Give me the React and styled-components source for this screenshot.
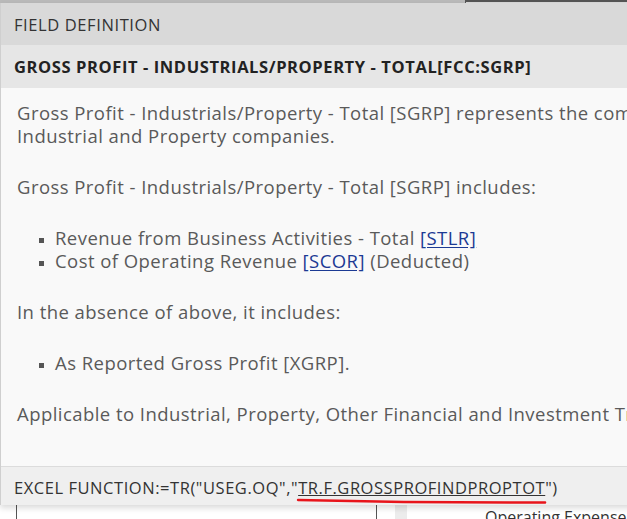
import React from "react";
import styled, { createGlobalStyle } from "styled-components";

const Global = createGlobalStyle`
  html, body { margin: 0; padding: 0; background: #ffffff; }
  body { width: 627px; height: 519px; overflow: hidden; font-family: "Open Sans", Lato, Arial, sans-serif; }
`;

const Page = styled.div`
  width: 627px;
  height: 519px;
  display: flex;
  flex-direction: column;
  overflow: hidden;
  background: #fff;
`;

const TopStrip = styled.div`
  height: 3px;
  display: flex;
  flex-shrink: 0;
`;

const StripGray = styled.div`
  width: 465px;
  background: #bababa;
`;

const StripDark = styled.div`
  flex: 1;
  background: #d9d9d9;
  border-top: 2px solid #555;
  border-left: 1px solid #555;
  box-sizing: border-box;
`;

const Panel = styled.div`
  position: relative;
  z-index: 1;
  height: 502px;
  flex-shrink: 0;
  width: 680px;
  display: flex;
  flex-direction: column;
  border-left: 1px solid #cfcfcf;
  box-sizing: border-box;
  box-shadow: 0 3px 6px rgba(0, 0, 0, 0.15);
  color: #333;
`;

const Header = styled.div`
  height: 42px;
  background: #d9d9d9;
  display: flex;
  align-items: center;
  padding-left: 13px;
  font-size: 16.5px;
  letter-spacing: 0.6px;
  color: #333;
`;

const Title = styled.div`
  height: 43px;
  background: #e6e6e6;
  display: flex;
  align-items: center;
  padding-left: 13px;
  font-size: 16.5px;
  letter-spacing: 0.6px;
  font-weight: 700;
  color: #222;
  white-space: nowrap;
`;

const Body = styled.div`
  flex: 1;
  background: #f9f9f9;
  padding: 13px 0 0 16px;
  font-size: 18.5px;
  letter-spacing: 0.45px;
  line-height: 23px;
  color: #5a5a5a;
  white-space: nowrap;
  overflow: hidden;
`;

const Para = styled.p`
  margin: 0 0 28px;
`;

const List = styled.ul`
  margin: 0 0 28px;
  padding: 0 0 0 38px;
  list-style: square;
`;

const Item = styled.li`
  &::marker { color: #555; font-size: 13px; }
`;

const Link = styled.a`
  color: #1c3a94;
  text-decoration: underline;
  text-underline-offset: 2px;
`;

const Footer = styled.div`
  height: 39px;
  flex-shrink: 0;
  background: #efefef;
  border-top: 1px solid #dcdcdc;
  display: flex;
  align-items: center;
  padding: 2px 0 0 13px;
  box-sizing: border-box;
  font-size: 16.5px;
  letter-spacing: 0.55px;
  color: #333;
  white-space: nowrap;
`;

const Marked = styled.span`
  position: relative;
  text-decoration: underline;
  text-underline-offset: 1px;
`;

const RedMark = styled.svg`
  position: absolute;
  left: 0;
  bottom: -6px;
  width: 100%;
  height: 8px;
  overflow: visible;
`;

const Under = styled.div`
  flex: 1;
  display: flex;
  background: #fff;
  position: relative;
`;

const Cell = styled.div`
  width: ${(p) => p.$w}px;
  border-left: ${(p) => (p.$line ? "1px solid #555" : "none")};
  background: ${(p) => p.$bg || "transparent"};
  flex-shrink: 0;
`;

const UnderText = styled.div`
  padding-left: 8px;
  font-size: 16px;
  color: #333;
  line-height: 14px;
  padding-top: 5px;
  white-space: nowrap;
`;

export default function App() {
  return (
    <>
      <Global />
      <Page>
        <TopStrip>
          <StripGray />
          <StripDark />
        </TopStrip>
        <Panel>
          <Header>FIELD DEFINITION</Header>
          <Title>GROSS PROFIT - INDUSTRIALS/PROPERTY - TOTAL[FCC:SGRP]</Title>
          <Body>
            <Para>
              Gross Profit - Industrials/Property - Total [SGRP] represents the combined gross profit of
              <br />
              Industrial and Property companies.
            </Para>
            <Para>Gross Profit - Industrials/Property - Total [SGRP] includes:</Para>
            <List>
              <Item>
                Revenue from Business Activities - Total <Link>[STLR]</Link>
              </Item>
              <Item>
                Cost of Operating Revenue <Link>[SCOR]</Link> (Deducted)
              </Item>
            </List>
            <Para>In the absence of above, it includes:</Para>
            <List>
              <Item>As Reported Gross Profit [XGRP].</Item>
            </List>
            <Para>Applicable to Industrial, Property, Other Financial and Investment Trust companies.</Para>
          </Body>
          <Footer>
            EXCEL FUNCTION:=TR("USEG.OQ","
            <Marked>
              TR.F.GROSSPROFINDPROPTOT
              <RedMark viewBox="0 0 100 8" preserveAspectRatio="none">
                <path d="M0 3 Q 50 6 100 5.5" stroke="#e8141b" strokeWidth="2.4" fill="none" vectorEffect="non-scaling-stroke" strokeLinecap="round" />
              </RedMark>
            </Marked>
            ")
          </Footer>
        </Panel>
        <Under>
          <Cell $w={16} />
          <Cell $w={359} $line />
          <Cell $w={18} $line />
          <Cell $w={12} $bg="#ececec" />
          <Cell $w={70} />
          <UnderText>Operating Expense</UnderText>
        </Under>
      </Page>
    </>
  );
}
